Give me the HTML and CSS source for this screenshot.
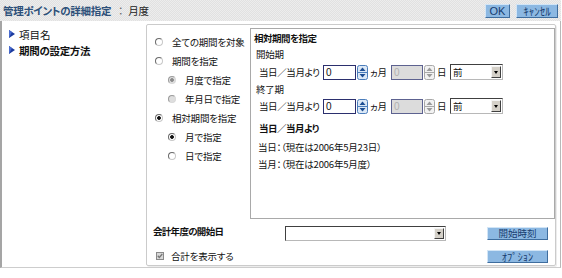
FILE: index.html
```html
<!DOCTYPE html>
<html lang="ja">
<head>
<meta charset="utf-8">
<title>管理ポイントの詳細指定</title>
<link rel="stylesheet" href="styles.css">
</head>
<body>
<div class="window">
  <header class="header">
    <div class="title"><span class="title-main">管理ポイントの詳細指定</span><span class="title-sep">：</span><span class="title-sub">月度</span></div>
    <div class="header-btns">
      <button class="btn btn-ok">OK</button>
      <button class="btn btn-cancel">ｷｬﾝｾﾙ</button>
    </div>
  </header>
  <div class="main">
    <nav class="nav">
      <div class="nav-item"><svg class="tri" width="6" height="8" viewBox="0 0 6 8"><polygon points="0,0 6,4 0,8" fill="#1b3a9e"/><polygon points="0,0 3,2 1,6 0,8" fill="#4a6cd0"/></svg><span>項目名</span></div>
      <div class="nav-item nav-bold"><svg class="tri" width="6" height="8" viewBox="0 0 6 8"><polygon points="0,0 6,4 0,8" fill="#1b3a9e"/><polygon points="0,0 3,2 1,6 0,8" fill="#4a6cd0"/></svg><span>期間の設定方法</span></div>
    </nav>
    <section class="panel">
      <div class="opts">
        <div class="opt"><span class="radio"></span>全ての期間を対象</div>
        <div class="opt"><span class="radio"></span>期間を指定</div>
        <div class="opt sub"><span class="radio disabled checked"></span>月度で指定</div>
        <div class="opt sub"><span class="radio disabled"></span>年月日で指定</div>
        <div class="opt"><span class="radio checked"></span>相対期間を指定</div>
        <div class="opt sub"><span class="radio checked"></span>月で指定</div>
        <div class="opt sub"><span class="radio"></span>日で指定</div>
      </div>
      <div class="rel">
        <div class="rel-title">相対期間を指定</div>
        <div class="rel-sub">開始期</div>
        <div class="rel-row">
          <span class="lbl-from">当日／当月より</span>
          <span class="num">0</span>
          <svg class="spin" width="11" height="15" viewBox="0 0 11 15"><rect x="0.5" y="0.5" width="10" height="14" rx="2" fill="#dbe8f6" stroke="#4b7dbb"/><line x1="1" y1="7.5" x2="10" y2="7.5" stroke="#4b7dbb"/><path d="M5.5 2.5 L8.5 6 H2.5Z" fill="#1d4e93"/><path d="M5.5 12.5 L8.5 9 H2.5Z" fill="#1d4e93"/></svg>
          <span class="unit-month">ヵ月</span>
          <span class="num disabled">0</span>
          <svg class="spin" width="11" height="15" viewBox="0 0 11 15"><rect x="0.5" y="0.5" width="10" height="14" rx="2" fill="#f2f2f2" stroke="#a8a8a8"/><line x1="1" y1="7.5" x2="10" y2="7.5" stroke="#a8a8a8"/><path d="M5.5 2.5 L8.5 6 H2.5Z" fill="#9a9a9a"/><path d="M5.5 12.5 L8.5 9 H2.5Z" fill="#9a9a9a"/></svg>
          <span class="unit-day">日</span>
          <span class="sel"><span class="sel-text">前</span><span class="sel-arrow"><span class="caret"></span></span></span>
        </div>
        <div class="rel-sub rel-sub2">終了期</div>
        <div class="rel-row">
          <span class="lbl-from">当日／当月より</span>
          <span class="num">0</span>
          <svg class="spin" width="11" height="15" viewBox="0 0 11 15"><rect x="0.5" y="0.5" width="10" height="14" rx="2" fill="#dbe8f6" stroke="#4b7dbb"/><line x1="1" y1="7.5" x2="10" y2="7.5" stroke="#4b7dbb"/><path d="M5.5 2.5 L8.5 6 H2.5Z" fill="#1d4e93"/><path d="M5.5 12.5 L8.5 9 H2.5Z" fill="#1d4e93"/></svg>
          <span class="unit-month">ヵ月</span>
          <span class="num disabled">0</span>
          <svg class="spin" width="11" height="15" viewBox="0 0 11 15"><rect x="0.5" y="0.5" width="10" height="14" rx="2" fill="#f2f2f2" stroke="#a8a8a8"/><line x1="1" y1="7.5" x2="10" y2="7.5" stroke="#a8a8a8"/><path d="M5.5 2.5 L8.5 6 H2.5Z" fill="#9a9a9a"/><path d="M5.5 12.5 L8.5 9 H2.5Z" fill="#9a9a9a"/></svg>
          <span class="unit-day">日</span>
          <span class="sel"><span class="sel-text">前</span><span class="sel-arrow"><span class="caret"></span></span></span>
        </div>
        <div class="rel-bold">当日／当月より</div>
        <div class="rel-note">当日：（現在は2006年5月23日）</div>
        <div class="rel-note">当月：（現在は2006年5月度）</div>
      </div>
      <div class="footer">
        <div class="frow">
          <span class="flabel">会計年度の開始日</span>
          <span class="sel fsel"><span class="sel-text"></span><span class="sel-arrow"><span class="caret"></span></span></span>
          <button class="btn btn-wide">開始時刻</button>
        </div>
        <div class="frow">
          <svg class="check" width="8" height="8" viewBox="0 0 8 8"><rect x="0.5" y="0.5" width="7" height="7" fill="#d8d8d8" stroke="#8a8a8a"/><path d="M1.8 3.8 L3.3 5.5 L6.3 2" fill="none" stroke="#777" stroke-width="1.3"/></svg>
          <span>合計を表示する</span>
          <button class="btn btn-wide btn-kana">ｵﾌﾟｼｮﾝ</button>
        </div>
      </div>
    </section>
  </div>
</div>
</body>
</html>
```
FILE: styles.css
```css
* { box-sizing: border-box; }
html, body { margin: 0; padding: 0; background: #fff; }
body {
  font-family: "Noto Sans CJK JP", "Noto Sans", sans-serif;
  font-size: 9.5px;
  letter-spacing: -0.2px;
  color: #111;
  font-feature-settings: "palt";
}
.window { width: 561px; }

/* header */
.header {
  height: 21px;
  display: flex;
  align-items: center;
  justify-content: space-between;
  padding: 0 3px 0 3px;
  background: repeating-conic-gradient(#e1e1e1 0 25%, #ededed 0 50%) 0 0 / 2px 2px;
}
.title { display: flex; align-items: center; line-height: 14px; font-size: 10.5px; white-space: nowrap; }
.title-main { font-weight: bold; color: #2d5079; letter-spacing: -0.3px; }
.title-sep { margin-left: 7px; color: #666; }
.title-sub { margin-left: 5px; color: #222; }
.header-btns { display: flex; gap: 6px; }

.btn {
  font-family: "Noto Sans CJK JP", "Noto Sans", sans-serif;
  font-feature-settings: "palt";
  font-size: 9.5px;
  letter-spacing: 0;
  color: #173c6e;
  background: #8cb8e2;
  border: 1px solid;
  border-color: #d2e5f6 #3e6d9e #3e6d9e #d2e5f6;
  padding: 0;
  margin: 0;
  height: 14px;
  line-height: 12px;
  text-align: center;
}
.btn-ok { width: 25px; font-family: "Liberation Sans", sans-serif; font-size: 11px; }
.btn-cancel { width: 42px; font-size: 11px; }
.btn-kana { font-size: 10.5px; }

/* main */
.main {
  display: flex;
  align-items: flex-start;
  border-left: 2px solid #a5a5a5;
  border-right: 1px solid #b8b8b8;
  border-bottom: 1px solid #cdcdcd;
  padding: 3px 4px 1px 0;
}
.nav { width: 144px; flex: none; padding: 2px 0 0 7px; }
.nav-item { display: flex; align-items: center; height: 16px; font-size: 10.5px; letter-spacing: 0; white-space: nowrap; }
.nav-item .tri { margin-right: 4px; flex: none; }
.nav-bold { font-weight: bold; letter-spacing: -0.3px; }

.panel {
  width: 410px;
  flex: none;
  border: 1px solid #cbcbcb;
  border-radius: 2px;
  padding-top: 3px;
  display: grid;
  grid-template-columns: 103px 1fr;
  box-shadow: 1px 1px 0 #ececec;
}

/* radio options */
.opts { padding: 4px 0 0 8px; }
.opt { display: flex; align-items: center; height: 19px; white-space: nowrap; }
.opt.sub { padding-left: 13px; }
.radio {
  width: 8px; height: 8px;
  flex: none;
  margin-right: 9px;
  border-radius: 50%;
  border: 1px solid;
  border-color: #6a6a6a #c8c8c8 #c8c8c8 #6a6a6a;
  background: #fff;
}
.radio.checked { background: radial-gradient(circle, #111 0 1.5px, #fff 2.2px); }
.radio.disabled { background: #dedede; border-color: #9a9a9a #d8d8d8 #d8d8d8 #9a9a9a; }
.radio.disabled.checked { background: radial-gradient(circle, #8a8a8a 0 1.5px, #dedede 2.2px); }

/* relative period box */
.rel {
  height: 191px;
  border: 1px solid #a9a9a9;
  padding: 1px 0 0 3px;
}
.rel-title { font-weight: bold; line-height: 16px; letter-spacing: -0.5px; }
.rel-sub { line-height: 16px; padding-left: 2px; }
.rel-sub2 { line-height: 14px; }
.rel-row { display: flex; align-items: center; height: 20px; padding-left: 5px; white-space: nowrap; }
.lbl-from { width: 64px; flex: none; letter-spacing: -0.4px; }
.num {
  width: 33px; height: 15px; flex: none;
  border: 1px solid #2b2f6e;
  background: #fff;
  font-family: "Liberation Sans", sans-serif;
  font-size: 10px;
  line-height: 13px;
  padding-left: 2px;
}
.num.disabled { width: 32px; background: #dcdcdc; color: #b0b0b0; border-color: #5d6290; }
.spin { margin-left: 1px; flex: none; }
.unit-month { width: 23px; padding-left: 2px; flex: none; }
.unit-day { width: 15px; padding-left: 2px; flex: none; }
.sel {
  width: 53px; height: 16px; flex: none;
  display: flex;
  border: 1px solid;
  border-color: #404040 #b8b8b8 #b8b8b8 #404040;
  background: #fff;
}
.sel-text { flex: 1; padding-left: 2px; line-height: 14px; }
.sel-arrow {
  width: 10px;
  margin: 1px;
  background: #d4d0c8;
  border: 1px solid;
  border-color: #f4f4f4 #404040 #404040 #f4f4f4;
  display: flex; align-items: center; justify-content: center;
}
.caret { width: 0; height: 0; border-top: 3px solid #000; border-left: 2.5px solid transparent; border-right: 2.5px solid transparent; }
.rel-bold { font-weight: bold; line-height: 16px; padding-left: 5px; margin-top: 4px; letter-spacing: -0.5px; }
.rel-note { line-height: 17px; padding-left: 4px; }
.rel-bold + .rel-note { margin-top: 3px; }

/* footer */
.footer { grid-column: 1 / -1; padding: 7px 7px 2px 6px; }
.frow { display: flex; align-items: center; height: 14px; white-space: nowrap; }
.frow + .frow { margin-top: 9px; }
.flabel { width: 132px; flex: none; font-weight: bold; margin-top: -4px; letter-spacing: -0.7px; }
.fsel { width: 161px; height: 15px; }
.btn-wide { margin-left: auto; width: 61px; height: 13px; line-height: 11px; }
.check { margin: 0 7px 0 3px; flex: none; }
```
